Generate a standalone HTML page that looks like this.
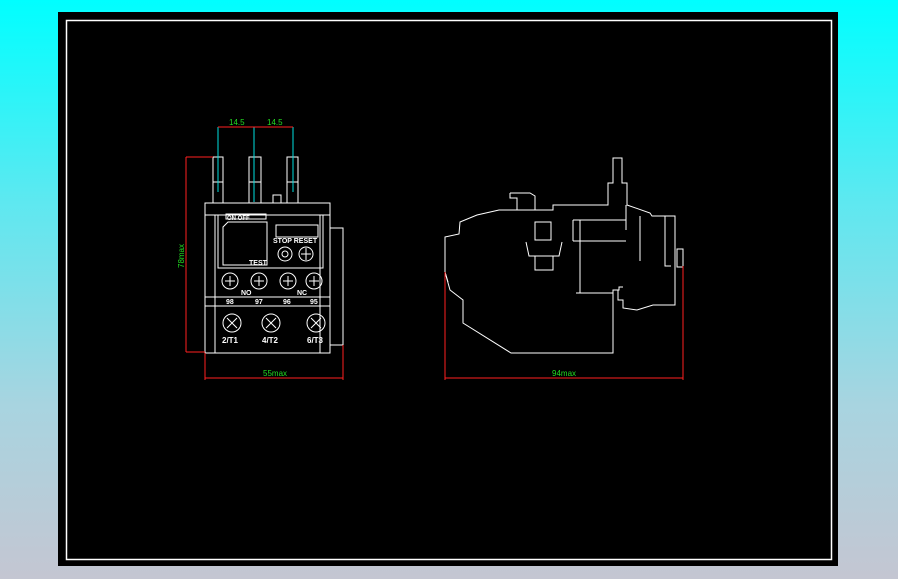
<!DOCTYPE html>
<html><head><style>
html,body{margin:0;padding:0;width:898px;height:579px;overflow:hidden;background:linear-gradient(180deg,#00ffff 0%,#5ee8f0 35%,#a8d4e0 70%,#c4c6d2 100%);}
svg{position:absolute;left:0;top:0}
text{font-family:"Liberation Sans",sans-serif}
</style></head><body>
<svg width="898" height="579" viewBox="0 0 898 579">
<rect x="58" y="12" width="780" height="554" fill="#000"/>
<rect x="66.5" y="20.5" width="765" height="539" fill="none" stroke="#fff" stroke-width="1.5"/>
<g fill="none" stroke="#fff" stroke-width="1">
<!-- front view -->
<rect x="213" y="157" width="10" height="46"/><rect x="249" y="157" width="12" height="46"/><rect x="287" y="157" width="11" height="46"/>
<path d="M213 182h10M249 182h12M287 182h11M273 203v-8h8v8"/>
<rect x="205" y="203" width="125" height="150"/>
<path d="M205 215h125M215 215v138M320 215v138M330 228h13v117h-13"/>
<rect x="218" y="215" width="105" height="53"/>
<path d="M223 265v-38l5-5h39v43z"/>
<rect x="226" y="214" width="40" height="5"/>
<rect x="276" y="225" width="42" height="12"/>
<circle cx="285" cy="254" r="7"/><circle cx="285" cy="254" r="3"/><circle cx="306" cy="254" r="7"/>
<path d="M306 248v12M301 254h10"/>
<path d="M205 297h125M205 306h125"/>
<circle cx="230" cy="281" r="8"/><circle cx="259" cy="281" r="8"/><circle cx="288" cy="281" r="8"/><circle cx="314" cy="281" r="8"/>
<path d="M225 281h10M230 276v10M254 281h10M259 276v10M283 281h10M288 276v10M309 281h10M314 276v10"/>
<circle cx="232" cy="323" r="9"/><circle cx="271" cy="323" r="9"/><circle cx="316" cy="323" r="9"/>
<path d="M227 318l10 10M237 318l-10 10M266 318l10 10M276 318l-10 10M311 318l10 10M321 318l-10 10"/>
<!-- side view -->
<path d="M445 237L459 234L460 222L477 215L499 210L553 210L553 205L608 205L608 183L613 183L613 158L622 158L622 183L627 183L627 205L650 213L652 216L675 216L675 305L653 305L637 310L623 308L623 300L618 300L618 290L613 290L613 353L511 353L463 323L463 300L450 290L445 272Z"/>
<path d="M510 193h20l5 3v14M510 193v5h7v12M580 220v73M576 293h37M573 220h53M573 241h53M573 220v21M626 205v25M640 216v45M665 216v50h6"/>
<rect x="535" y="222" width="16" height="18"/><rect x="535" y="256" width="18" height="14"/>
<path d="M526 242l3 14h30l3-14"/><rect x="677" y="249" width="6" height="18"/>
<path d="M445 272l3 10M613 290h6v-3h4"/>
</g>
<g stroke="#00e0e0" stroke-width="1">
<path d="M218 127v65M254 127v75M293 127v65"/>
</g>
<g stroke="#ff2020" stroke-width="1" fill="none">
<path d="M218 127h75M186 157v195M186 157h27M186 352h19M205 353v27M343 345v35M205 378h138"/>
<path d="M445 272v108M683 266v114M445 378h238"/>
</g>
<g fill="#22dd22" font-size="8">
<text x="229" y="125">14.5</text><text x="267" y="125">14.5</text>
<text x="263" y="376">55max</text><text x="552" y="376">94max</text>
<text transform="translate(184,268) rotate(-90)">78max</text>
</g>
<g fill="#fff" font-size="7" font-weight="bold">
<text x="227" y="220" font-size="6">ON OFF</text>
<text x="273" y="243">STOP RESET</text>
<text x="249" y="265">TEST</text>
<text x="241" y="295">NO</text><text x="297" y="295">NC</text>
<text x="226" y="304">98</text><text x="255" y="304">97</text><text x="283" y="304">96</text><text x="310" y="304">95</text>
<text x="222" y="343" font-size="8">2/T1</text><text x="262" y="343" font-size="8">4/T2</text><text x="307" y="343" font-size="8">6/T3</text>
</g>
</svg>
</body></html>
